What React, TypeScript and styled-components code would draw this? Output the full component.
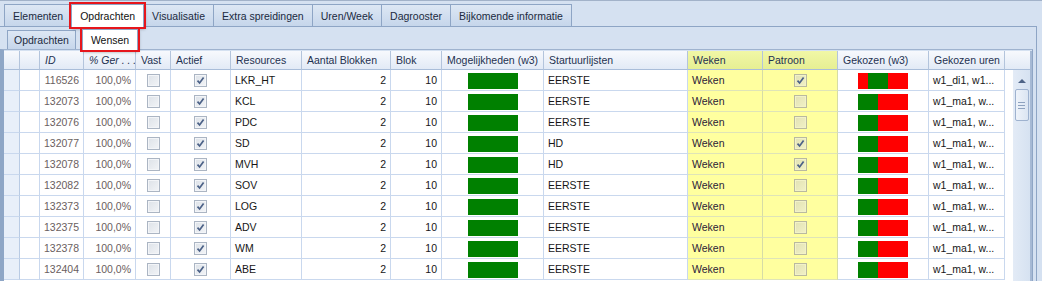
import React from "react";
import styled, { createGlobalStyle, css } from "styled-components";

const GlobalStyle = createGlobalStyle`
  html, body {
    margin: 0;
    padding: 0;
  }
  body {
    font-family: "Liberation Sans", Arial, sans-serif;
    font-size: 10.5px;
    background: #d5e1f1;
  }
`;

const COLS = "16px 20px 44px 52px 35px 60px 71px 89px 51px 102px 144px 75px 75px 91px 76px";

const Window = styled.div`
  width: 1042px;
  height: 281px;
  box-sizing: border-box;
  overflow: hidden;
  background: #d5e1f1;
  border-top: 1px solid #a2b2c9;
  padding-top: 3px;
  display: flex;
  flex-direction: column;
`;

const TabStrip = styled.div<{ $sub?: boolean }>`
  display: flex;
  align-items: flex-end;
  flex: none;
  height: ${(p) => (p.$sub ? 21 : 22)}px;
  padding-left: ${(p) => (p.$sub ? 7 : 4)}px;
`;

const Tab = styled.div<{ $active?: boolean; $marked?: boolean; $sub?: boolean }>`
  height: ${(p) => (p.$sub ? 19 : 22)}px;
  box-sizing: border-box;
  padding: 0 ${(p) => (p.$sub ? (p.$active ? 8 : 6) : 8)}px;
  display: flex;
  align-items: center;
  border: 1px solid #8ea5c5;
  border-bottom: none;
  margin-right: ${(p) => (p.$sub ? 6 : -1)}px;
  background: linear-gradient(#dde7f4, #c6d6eb);
  color: #1b2a40;
  white-space: nowrap;
  ${(p) =>
    p.$active &&
    css`
      background: #fff;
      color: #111;
      position: relative;
      z-index: 1;
      height: ${p.$sub ? 21 : 23}px;
      margin-bottom: -1px;
    `}
  ${(p) =>
    p.$marked &&
    css`
      outline: 2px solid #e6161c;
      outline-offset: 0;
      box-shadow: 1px 2px 3px rgba(0, 0, 0, 0.35);
    `}
`;

const Page = styled.div`
  flex: 1;
  min-height: 0;
  display: flex;
  flex-direction: column;
  border-top: 1px solid #8ea5c5;
  border-right: 1px solid #8ea5c5;
  margin-right: 5px;
  padding-top: 1px;
  padding-right: 3px;
  background: #d5e1f1;
`;

const SubPage = styled.div`
  flex: 1;
  min-height: 0;
  border-top: 1px solid #9fb3cf;
  border-left: 4px solid #8ea6c6;
  border-right: 1px solid #8ea5c5;
  padding-top: 1px;
  overflow: hidden;
  background: #d5e1f1;
`;

const Grid = styled.div`
  display: flex;
  width: 1026px;
  height: 100%;
  border-right: 2px solid #a6b9d4;
  background: #fff;
`;

const Rows = styled.div`
  width: 1001px;
  flex: none;
`;

const Row = styled.div<{ $head?: boolean }>`
  display: grid;
  grid-template-columns: ${COLS};
  height: ${(p) => (p.$head ? 19 : 21)}px;
`;

const Cell = styled.div<{
  $head?: boolean;
  $align?: "left" | "right" | "center";
  $yellow?: boolean;
  $muted?: boolean;
  $italic?: boolean;
  $indicator?: boolean;
}>`
  box-sizing: border-box;
  display: flex;
  align-items: center;
  overflow: hidden;
  white-space: nowrap;
  padding: 0 ${(p) => (p.$head ? 5 : 4)}px;
  justify-content: ${(p) =>
    p.$align === "right" ? "flex-end" : p.$align === "center" ? "center" : "flex-start"};
  border-right: 1px solid #c9d8ee;
  border-bottom: 1px solid #c9d8ee;
  color: ${(p) => (p.$muted ? "#6a6060" : "#161616")};
  font-style: ${(p) => (p.$italic ? "italic" : "normal")};
  background: ${(p) => (p.$yellow ? "#ffff9f" : "#fff")};
  ${(p) =>
    p.$yellow &&
    css`
      color: #2c2238;
      border-right-color: #d6dca6;
      border-bottom-color: #dfe4b8;
    `}
  ${(p) =>
    p.$indicator &&
    css`
      background: #e8eff9;
      border-right-color: #b9cbe4;
    `}
  ${(p) =>
    p.$head &&
    css`
      color: #1e3150;
      background: ${p.$yellow
        ? "linear-gradient(#f1f7a6, #e6ef93)"
        : "linear-gradient(#f7f9fd, #e2eaf6)"};
      border-right-color: #b3c4dc;
      border-bottom-color: #a9bdd9;
    `}
`;

const ScrollCol = styled.div`
  flex: 1;
  display: flex;
  flex-direction: column;
`;

const HeadFiller = styled.div`
  height: 19px;
  flex: none;
  box-sizing: border-box;
  background: linear-gradient(#f7f9fd, #e2eaf6);
  border-bottom: 1px solid #a9bdd9;
`;

const ScrollBody = styled.div`
  flex: 1;
  display: flex;
  padding-left: 8px;
  background: #fff;
`;

const Track = styled.div`
  width: 17px;
  display: flex;
  flex-direction: column;
  align-items: center;
  background: linear-gradient(90deg, #e3ebf6, #d6e2f1);
`;

const Arrow = styled.div`
  margin-top: 9px;
  width: 0;
  height: 0;
  border-left: 4px solid transparent;
  border-right: 4px solid transparent;
  border-bottom: 4px solid #4e6487;
`;

const Thumb = styled.div`
  margin-top: 6px;
  width: 14px;
  height: 32px;
  box-sizing: border-box;
  border: 1px solid #9eb2cf;
  border-radius: 2px;
  background: linear-gradient(90deg, #eef3fa, #dbe5f2);
  display: flex;
  flex-direction: column;
  align-items: center;
  justify-content: center;
  gap: 2px;
`;

const Grip = styled.span`
  width: 7px;
  height: 1px;
  background: #8ea2bf;
`;

const Box = styled.span<{ $tint?: boolean }>`
  width: 13px;
  height: 13px;
  box-sizing: border-box;
  display: inline-flex;
  align-items: center;
  justify-content: center;
  border: 1px solid ${(p) => (p.$tint ? "#b9b9a0" : "#abb5c3")};
  box-shadow: inset 0 0 0 1px ${(p) => (p.$tint ? "#f2f2c8" : "#f3f5f8")};
  background: ${(p) =>
    p.$tint ? "linear-gradient(135deg, #e2e2b4, #f1f1c6)" : "linear-gradient(135deg, #dde2e8, #f2f4f7)"};
`;

const Bar = styled.div`
  display: flex;
  width: 50px;
  height: 16px;
  margin-top: 1px;
`;

const Segment = styled.span<{ $red?: boolean }>`
  background: ${(p) => (p.$red ? "#ff0000" : "#008000")};
`;

const Check = ({ on, tint }: { on: boolean; tint?: boolean }) => (
  <Box $tint={tint}>
    {on && (
      <svg width="9" height="9" viewBox="0 0 9 9">
        <path d="M1.5 4.6 L3.6 7 L7.6 1.4" fill="none" stroke="#4b6187" strokeWidth="1.7" />
      </svg>
    )}
  </Box>
);

type Opdracht = {
  id: string;
  res: string;
  start: string;
  patroon: boolean;
  gekozen: number[];
  uren: string;
};

const data: Opdracht[] = [
  { id: "116526", res: "LKR_HT", start: "EERSTE", patroon: true, gekozen: [10, 20, 20], uren: "w1_di1, w1..." },
  { id: "132073", res: "KCL", start: "EERSTE", patroon: false, gekozen: [0, 20, 30], uren: "w1_ma1, w..." },
  { id: "132076", res: "PDC", start: "EERSTE", patroon: false, gekozen: [0, 20, 30], uren: "w1_ma1, w..." },
  { id: "132077", res: "SD", start: "HD", patroon: true, gekozen: [0, 20, 30], uren: "w1_ma1, w..." },
  { id: "132078", res: "MVH", start: "HD", patroon: true, gekozen: [0, 20, 30], uren: "w1_ma1, w..." },
  { id: "132082", res: "SOV", start: "EERSTE", patroon: false, gekozen: [0, 20, 30], uren: "w1_ma1, w..." },
  { id: "132373", res: "LOG", start: "EERSTE", patroon: false, gekozen: [0, 20, 30], uren: "w1_ma1, w..." },
  { id: "132375", res: "ADV", start: "EERSTE", patroon: false, gekozen: [0, 20, 30], uren: "w1_ma1, w..." },
  { id: "132378", res: "WM", start: "EERSTE", patroon: false, gekozen: [0, 20, 30], uren: "w1_ma1, w..." },
  { id: "132404", res: "ABE", start: "EERSTE", patroon: false, gekozen: [0, 20, 30], uren: "w1_ma1, w..." },
];

const mainTabs = [
  "Elementen",
  "Opdrachten",
  "Visualisatie",
  "Extra spreidingen",
  "Uren/Week",
  "Dagrooster",
  "Bijkomende informatie",
];

const App = () => {
  return (
    <Window>
      <GlobalStyle />
      <TabStrip>
        {mainTabs.map((t) => (
          <Tab key={t} $active={t === "Opdrachten"} $marked={t === "Opdrachten"}>
            {t}
          </Tab>
        ))}
      </TabStrip>
      <Page>
        <TabStrip $sub>
          <Tab $sub>Opdrachten</Tab>
          <Tab $sub $active $marked>
            Wensen
          </Tab>
        </TabStrip>
        <SubPage>
          <Grid>
            <Rows>
              <Row $head>
                <Cell $head />
                <Cell $head />
                <Cell $head $italic>ID</Cell>
                <Cell $head $italic>% Ger . . .</Cell>
                <Cell $head>Vast</Cell>
                <Cell $head>Actief</Cell>
                <Cell $head>Resources</Cell>
                <Cell $head>Aantal Blokken</Cell>
                <Cell $head>Blok</Cell>
                <Cell $head>Mogelijkheden (w3)</Cell>
                <Cell $head>Startuurlijsten</Cell>
                <Cell $head $yellow>Weken</Cell>
                <Cell $head $yellow>Patroon</Cell>
                <Cell $head>Gekozen (w3)</Cell>
                <Cell $head>Gekozen uren</Cell>
              </Row>
              {data.map((r) => (
                <Row key={r.id}>
                  <Cell $indicator />
                  <Cell />
                  <Cell $align="right" $muted>{r.id}</Cell>
                  <Cell $align="right" $muted>100,0%</Cell>
                  <Cell $align="center">
                    <Check on={false} />
                  </Cell>
                  <Cell $align="center">
                    <Check on />
                  </Cell>
                  <Cell>{r.res}</Cell>
                  <Cell $align="right">2</Cell>
                  <Cell $align="right">10</Cell>
                  <Cell $align="center">
                    <Bar>
                      <Segment style={{ width: 50 }} />
                    </Bar>
                  </Cell>
                  <Cell>{r.start}</Cell>
                  <Cell $yellow>Weken</Cell>
                  <Cell $yellow $align="center">
                    <Check on={r.patroon} tint />
                  </Cell>
                  <Cell $align="center">
                    <Bar>
                      {r.gekozen.map((w, i) =>
                        w > 0 ? <Segment key={i} $red={i !== 1} style={{ width: w }} /> : null
                      )}
                    </Bar>
                  </Cell>
                  <Cell>{r.uren}</Cell>
                </Row>
              ))}
            </Rows>
            <ScrollCol>
              <HeadFiller />
              <ScrollBody>
                <Track>
                  <Arrow />
                  <Thumb>
                    <Grip />
                    <Grip />
                    <Grip />
                  </Thumb>
                </Track>
              </ScrollBody>
            </ScrollCol>
          </Grid>
        </SubPage>
      </Page>
    </Window>
  );
};

export default App;
